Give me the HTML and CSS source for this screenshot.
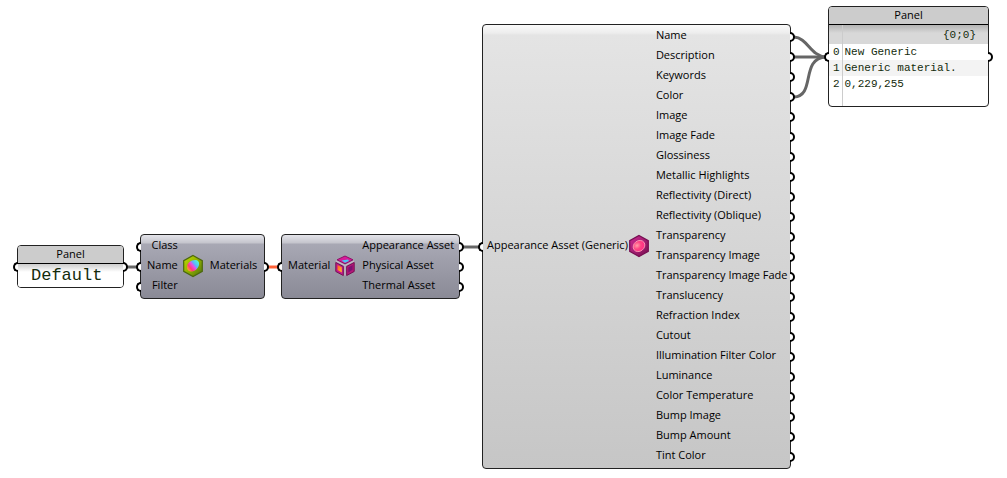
FILE: index.html
```html
<!DOCTYPE html>
<html lang="en">
<head>
<meta charset="utf-8">
<title>Material asset graph</title>
<link rel="stylesheet" href="styles.css">
</head>
<body>
<main class="canvas">
  <svg class="wires" width="1007" height="478" aria-hidden="true">
    <path d="M126 267H138"/>
    <path class="wire-hot" d="M268 267H278"/>
    <path d="M463 247H479"/>
    <path d="M794 37C808 38 810 56 826 57"/>
    <path d="M794 57H826"/>
    <path d="M794 97C816 96 800 58 826 57"/>
  </svg>

  <section class="panel panel-default">
    <h2 class="panel-title">Panel</h2>
    <p class="panel-text">Default</p>
    <i class="port port-in"></i><i class="port port-out"></i>
  </section>

  <section class="node node-materials">
    <ul class="inputs">
      <li class="in">Class</li>
      <li class="in">Name</li>
      <li class="in">Filter</li>
    </ul>
    <svg class="icon" viewBox="0 0 22 24" aria-hidden="true">
      <defs>
        <linearGradient id="green" x1="0" y1="0" x2="1" y2="1"><stop offset="0" stop-color="#c5df00"/><stop offset=".5" stop-color="#8fb000"/><stop offset="1" stop-color="#4d7010"/></linearGradient>
        <linearGradient id="rainbow" gradientUnits="userSpaceOnUse" x1="6" y1="16" x2="16" y2="8"><stop offset="0" stop-color="#ffa02e"/><stop offset=".25" stop-color="#ff3f72"/><stop offset=".5" stop-color="#f04ce0"/><stop offset=".7" stop-color="#58b8ff"/><stop offset="1" stop-color="#58efd0"/></linearGradient>
      </defs>
      <path d="M11 1.5L20.3 6.7V17.3L11 22.5L1.7 17.3V6.7Z" fill="url(#green)" stroke="#4c680d" stroke-width="1.2"/>
      <path d="M5 13C5 9 9 6 13 6C16 6 17.5 8 17 11C16 15 12 18 8.500 17.500C6 17 5 15.500 5 13Z" fill="url(#rainbow)"/>
    </svg>
    <ul class="outputs"><li class="out">Materials</li></ul>
  </section>

  <section class="node node-material">
    <ul class="inputs"><li class="in">Material</li></ul>
    <svg class="icon" viewBox="0 0 22 24" aria-hidden="true">
      <defs>
        <linearGradient id="fire" x1="0" y1="0" x2="1" y2="1"><stop offset="0" stop-color="#ff5a20"/><stop offset="1" stop-color="#ffc02e"/></linearGradient>
      </defs>
      <path d="M11 2L19 5.800L11 9.800L3 5.800Z" fill="#d81b9a" stroke="#8d1168"/>
      <path d="M7.500 6.500L14 5.500L15 7L11 8.800Z" fill="#45c6f5"/>
      <path d="M1.800 8.500L9.300 12.400V21.500L1.800 17.500Z" fill="#c2188c" stroke="#761052"/>
      <path d="M3.500 11L7.800 13.200V18.500L3.500 16Z" fill="url(#fire)"/>
      <path d="M20.200 8.500L12.700 12.400V21.500L20.200 17.500Z" fill="#b51678" stroke="#761052"/>
      <path d="M18.600 11L14.300 13.500V18.500L18.600 15.800Z" fill="#7c1271"/>
      <path d="M2 7L11 11.500L20 7M11 11.500V21.500" fill="none" stroke="#d5b8cf"/>
    </svg>
    <ul class="outputs">
      <li class="out">Appearance Asset</li>
      <li class="out">Physical Asset</li>
      <li class="out">Thermal Asset</li>
    </ul>
  </section>

  <section class="node node-asset">
    <ul class="inputs"><li class="in">Appearance Asset (Generic)</li></ul>
    <svg class="icon" viewBox="0 0 22 24" aria-hidden="true">
      <defs>
        <linearGradient id="magenta" x1="0" y1="0" x2="1" y2="1"><stop offset="0" stop-color="#cf2a94"/><stop offset="1" stop-color="#78104f"/></linearGradient>
        <radialGradient id="gem" cx=".4" cy=".35" r=".65"><stop offset="0" stop-color="#ffa0a8"/><stop offset=".5" stop-color="#ff4583"/><stop offset="1" stop-color="#ff2c86"/></radialGradient>
      </defs>
      <path d="M11 1.500L20.300 6.700V17.300L11 22.500L1.700 17.300V6.700Z" fill="url(#magenta)" stroke="#760e51" stroke-width="1.2"/>
      <ellipse cx="11" cy="12" rx="6.200" ry="5.200" transform="rotate(-38 11 12)" fill="url(#gem)" stroke="#ff9fb7" stroke-width=".8"/>
    </svg>
    <ul class="outputs">
      <li class="out">Name</li>
      <li class="out">Description</li>
      <li class="out">Keywords</li>
      <li class="out">Color</li>
      <li class="out">Image</li>
      <li class="out">Image Fade</li>
      <li class="out">Glossiness</li>
      <li class="out">Metallic Highlights</li>
      <li class="out">Reflectivity (Direct)</li>
      <li class="out">Reflectivity (Oblique)</li>
      <li class="out">Transparency</li>
      <li class="out">Transparency Image</li>
      <li class="out">Transparency Image Fade</li>
      <li class="out">Translucency</li>
      <li class="out">Refraction Index</li>
      <li class="out">Cutout</li>
      <li class="out">Illumination Filter Color</li>
      <li class="out">Luminance</li>
      <li class="out">Color Temperature</li>
      <li class="out">Bump Image</li>
      <li class="out">Bump Amount</li>
      <li class="out">Tint Color</li>
    </ul>
  </section>

  <section class="panel panel-data">
    <h2 class="panel-title">Panel</h2>
    <table class="data">
      <thead><tr><th></th><th>{0;0}</th></tr></thead>
      <tbody>
        <tr><td>0</td><td>New Generic</td></tr>
        <tr><td>1</td><td>Generic material.</td></tr>
        <tr><td>2</td><td>0,229,255</td></tr>
        <tr class="filler"><td></td><td></td></tr>
      </tbody>
    </table>
    <i class="port port-in"></i><i class="port port-out"></i>
  </section>
</main>
</body>
</html>
```
FILE: styles.css
```css
*, ::before, ::after { box-sizing: border-box; }

body {
  margin: 0;
  background: #fff;
  color: #000;
  font: 11px/20px "Open Sans", "Noto Sans", sans-serif;
}

.canvas {
  position: relative;
  min-height: 100vh;
  overflow: hidden;
}

.wires {
  position: absolute;
  left: 0;
  top: 0;
  fill: none;
  stroke: #666;
  stroke-width: 3;
}
.wire-hot { stroke: #ff6238; }

/* Nodes */
.node {
  position: absolute;
  display: flex;
  align-items: center;
  padding-bottom: 3px;
  border: 1px solid #222;
  border-radius: 4px;
  white-space: nowrap;
}
.node-materials, .node-material {
  background: linear-gradient(#e4e4ea, #c4c4cc 8px, #a8a8b4 9px, #8a8a96);
}
.node-materials { left: 140px; top: 234px; width: 125px; }
.node-material { left: 281px; top: 234px; width: 179px; }
.node-asset {
  left: 482px;
  top: 24px;
  width: 309px;
  background: linear-gradient(#fafafa, #ededed 8px, #e4e4e4 10px, #c6c6c6);
}

.inputs, .outputs {
  margin: 0;
  padding: 0;
  list-style: none;
}
.inputs { padding-left: 6px; text-align: right; }
.outputs { flex: 1; }
.icon {
  flex: none;
  width: 22px;
  height: 24px;
  margin: 2px 6px 0 4px;
}
.node-asset .inputs { padding-left: 4px; }
.node-asset .icon { margin-left: 0; }

/* Half-round connectors on the node edges */
.in::before, .out::after, .port {
  content: "";
  position: absolute;
  width: 5px;
  height: 10px;
  border: 2px solid #000;
  background: #fff;
}
.in::before, .port-in {
  left: -5px;
  border-right: 0;
  border-radius: 5px 0 0 5px;
}
.out::after, .port-out {
  right: -5px;
  border-left: 0;
  border-radius: 0 5px 5px 0;
}
.in::before, .out::after { margin-top: 7px; }
.port { top: calc(50% - 5px); }

/* Panels */
.panel {
  position: absolute;
  border: 1px solid #222;
  border-radius: 4px;
  background: #fff;
}
.panel-default { left: 17px; top: 245px; width: 107px; }
.panel-data { left: 828px; top: 6px; width: 161px; }
.panel-title {
  margin: 0;
  height: 18px;
  border-bottom: 1px solid #000;
  border-radius: 3px 3px 0 0;
  background: #ccc;
  font: inherit;
  line-height: 15px;
  text-align: center;
}
.panel-text {
  margin: 0;
  padding-left: 13px;
  border-radius: 0 0 3px 3px;
  background: linear-gradient(#ccc, #fff 8px);
  color: #142b0c;
  font: 17px/23px "Liberation Mono", monospace;
}

.data {
  width: 100%;
  border-collapse: collapse;
  color: #142b0c;
  font: 11px/16px "Liberation Mono", monospace;
}
.data th, .data td { padding: 0 0 0 2px; text-align: left; font-weight: 400; }
.data tr > :first-child {
  width: 13px;
  padding: 0 2px 0 0;
  border-right: 1px solid #ccc;
  text-align: right;
}
.data thead { background: linear-gradient(#b4b4b4, #d8d8d8 8px); }
.data thead tr > :last-child { height: 19px; padding-right: 12px; text-align: right; }
.data tbody tr:nth-child(2) { background: #f3f3f3; }
.filler td { height: 14px; }
```
